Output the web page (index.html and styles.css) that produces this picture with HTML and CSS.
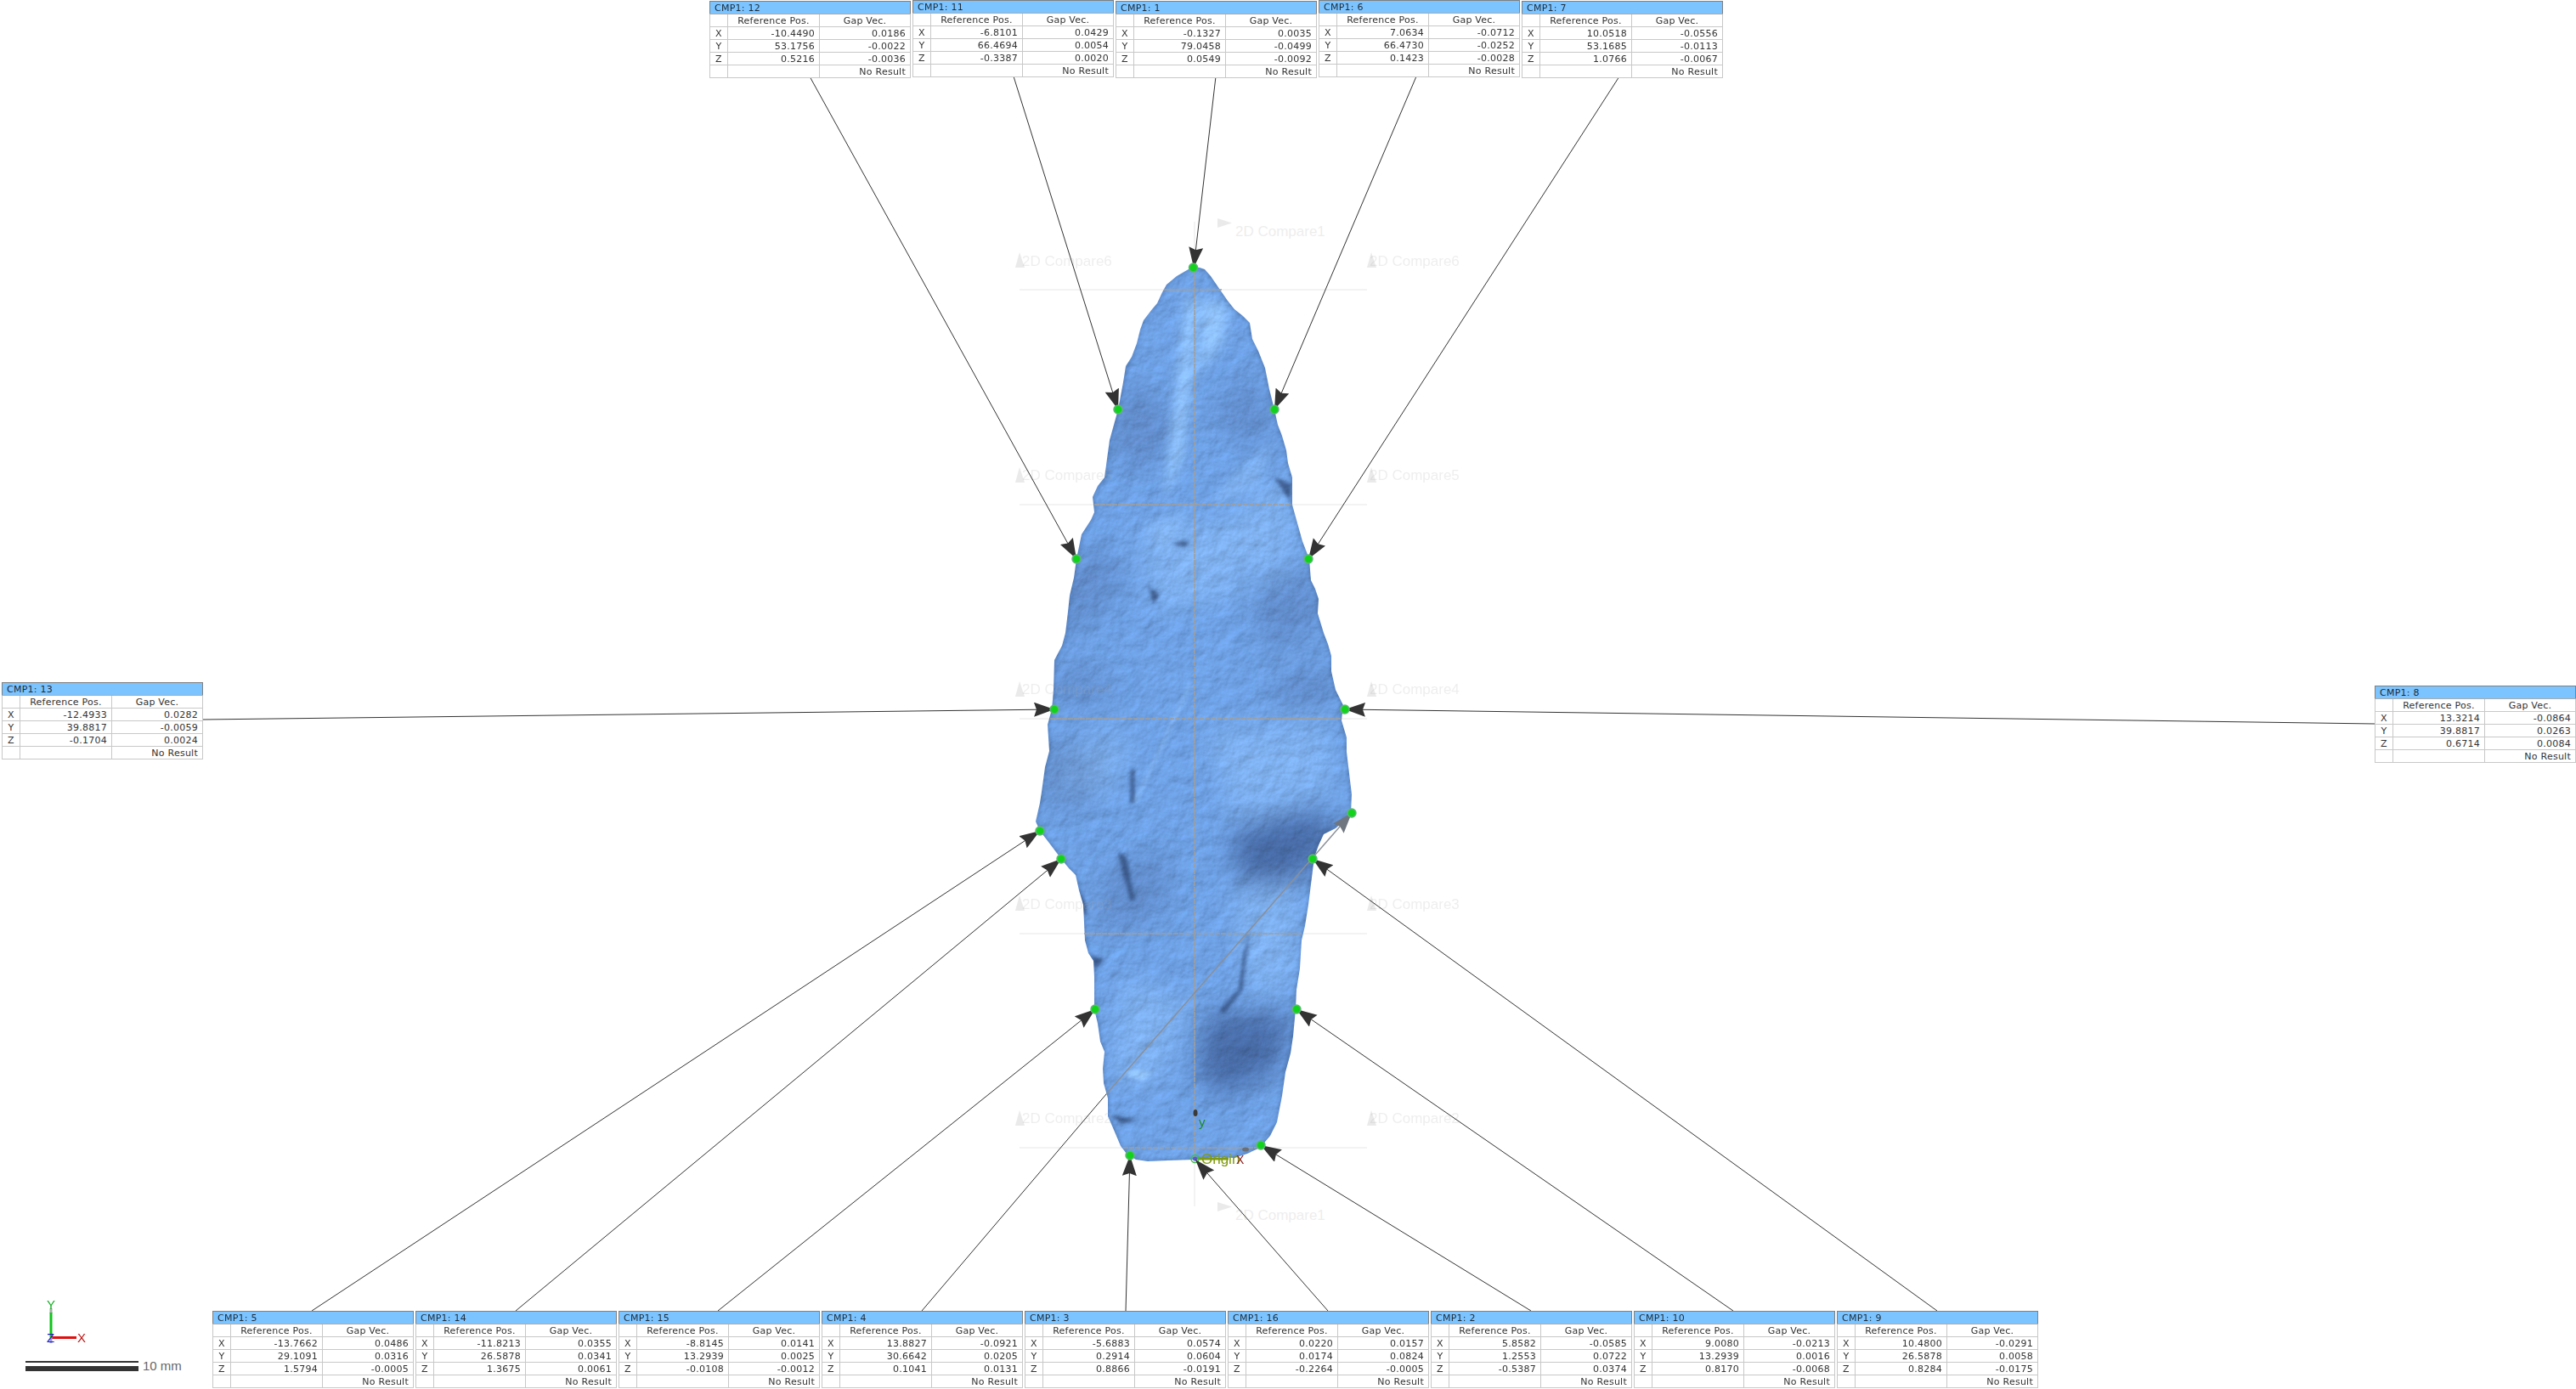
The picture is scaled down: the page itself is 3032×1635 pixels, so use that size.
FILE: index.html
```html
<!DOCTYPE html>
<html lang="en">
<head>
    <meta charset="UTF-8">
    <title>2D Compare</title>
    <link rel="stylesheet" href="styles.css">
</head>
<body>
<div class="canvas">
    <svg class="scene" width="3032" height="1635" viewBox="0 0 3032 1635">
        <defs>
            <marker id="head" markerUnits="userSpaceOnUse" markerWidth="26" markerHeight="18" refX="24" refY="8.5" orient="auto">
                <path d="M0 0 L24 8.5 L0 17 L3 8.5 Z" fill="#333"/>
            </marker>
            <marker id="head-grey" markerUnits="userSpaceOnUse" markerWidth="26" markerHeight="18" refX="24" refY="8.5" orient="auto">
                <path d="M0 0 L24 8.5 L0 17 L3 8.5 Z" fill="#6f7680"/>
            </marker>
            <clipPath id="stone-clip">
                <use href="#stone-shape"/>
            </clipPath>
            <filter id="blur2" x="-30%" y="-30%" width="160%" height="160%"><feGaussianBlur stdDeviation="2"/></filter>
            <filter id="blur7" x="-40%" y="-40%" width="180%" height="180%"><feGaussianBlur stdDeviation="7"/></filter>
            <filter id="blur16" x="-50%" y="-50%" width="200%" height="200%"><feGaussianBlur stdDeviation="16"/></filter>
            <filter id="stone-tex" x="1200" y="300" width="410" height="1080" filterUnits="userSpaceOnUse" color-interpolation-filters="sRGB">
                <feTurbulence type="fractalNoise" baseFrequency="0.05" numOctaves="4" seed="5" result="noise"/>
                <feDiffuseLighting in="noise" surfaceScale="1.2" diffuseConstant="1" lighting-color="#fff" result="light">
                    <feDistantLight azimuth="235" elevation="62"/>
                </feDiffuseLighting>
                <feComposite in="SourceGraphic" in2="light" operator="arithmetic" k1="1.13" k2="0" k3="0" k4="0"/>
            </filter>
            <path id="stone-shape" d="M1404 314 L1412 315 L1418 317 L1425 325 L1436 341 L1445 354 L1453 364 L1463 372 L1471 380 L1474 399 L1481 413 L1489 433 L1494 458 L1500 482 L1504 500 L1509 513 L1514 530 L1516 545 L1521 562 L1521 594 L1526 612 L1533 637 L1541 658 L1543 683 L1548 693 L1552 705 L1551 722 L1558 745 L1563 758 L1567 772 L1567 790 L1572 812 L1581 830 L1579 848 L1585 868 L1585 885 L1588 910 L1591 935 L1590 958 L1581 967 L1572 975 L1558 982 L1552 995 L1547 1009 L1544 1033 L1540 1065 L1536 1090 L1532 1107 L1530 1140 L1526 1165 L1525 1188 L1522 1220 L1519 1240 L1513 1262 L1509 1290 L1503 1321 L1495 1337 L1483 1351 L1468 1358 L1453 1363 L1430 1362 L1405 1365 L1375 1366 L1351 1367 L1337 1365 L1326 1358 L1319 1349 L1311 1330 L1304 1314 L1304 1293 L1299 1275 L1298 1258 L1300 1238 L1295 1226 L1292 1205 L1288 1188 L1288 1150 L1287 1131 L1281 1122 L1277 1107 L1275 1065 L1270 1048 L1266 1030 L1258 1022 L1249 1011 L1237 995 L1224 978 L1219 967 L1224 945 L1226 932 L1230 903 L1235 884 L1233 853 L1238 835 L1240 812 L1241 777 L1250 760 L1254 745 L1257 720 L1259 701 L1264 680 L1267 658 L1273 629 L1284 612 L1288 603 L1286 585 L1292 572 L1300 562 L1303 540 L1306 518 L1316 482 L1322 450 L1325 431 L1332 420 L1338 404 L1342 388 L1346 377 L1356 364 L1362 357 L1368 344 L1373 335 L1385 325 Z"/>
        </defs>

        <!-- faint construction lines and section labels -->
        <g class="guides">
            <line x1="1200" y1="341" x2="1609" y2="341"/>
            <line x1="1200" y1="594" x2="1609" y2="594"/>
            <line x1="1200" y1="846" x2="1609" y2="846"/>
            <line x1="1200" y1="1099" x2="1609" y2="1099"/>
            <line x1="1200" y1="1351" x2="1609" y2="1351"/>
            <line x1="1406" y1="261" x2="1406" y2="1420"/>
        </g>

        <!-- stone -->
        <g clip-path="url(#stone-clip)">
            <g filter="url(#stone-tex)">
                <rect class="stone-base" x="1200" y="300" width="410" height="1080"/>
                <g filter="url(#blur16)">
                    <path class="lit-soft" d="M1470 580 L1510 560 L1530 640 L1490 690 L1450 640 Z"/>
                    <path class="lit-soft" d="M1250 880 L1330 860 L1310 930 L1240 940 Z"/>
                    <path class="lit-soft" d="M1420 860 L1560 850 L1570 930 L1450 960 Z"/>
                    <path class="lit-soft" d="M1320 1150 L1400 1180 L1360 1280 L1310 1270 Z"/>
                    <path class="lit-soft" d="M1450 1050 L1530 1040 L1525 1160 L1470 1170 Z"/>
                    <path class="lit-soft" d="M1340 620 L1470 610 L1460 700 L1360 720 Z"/>
                    <path class="shade" d="M1450 975 L1560 950 L1570 985 L1530 1040 L1460 1045 Z"/>
                    <path class="shade" d="M1415 1195 L1520 1190 L1505 1260 L1440 1290 L1410 1270 Z"/>
                    <path class="shade-soft" d="M1235 680 L1290 640 L1330 680 L1260 760 Z"/>
                    <path class="shade-soft" d="M1320 440 L1400 500 L1340 560 L1305 530 Z"/>
                    <path class="shade-soft" d="M1480 430 L1420 490 L1500 540 Z"/>
                    <path class="shade-soft" d="M1540 660 L1470 690 L1490 770 L1560 740 Z"/>
                    <path class="shade-soft" d="M1225 870 L1300 880 L1280 960 L1225 950 Z"/>
                    <path class="shade-soft" d="M1240 780 L1320 800 L1290 830 L1236 820 Z"/>
                    <path class="shade-soft" d="M1570 780 L1490 800 L1510 840 L1580 830 Z"/>
                    <path class="shade-soft" d="M1300 1020 L1380 1000 L1370 1080 L1290 1100 Z"/>
                </g>
                <g filter="url(#blur7)">
                    <path class="lit" d="M1396 350 L1410 350 L1404 440 L1392 540 L1370 590 L1380 500 Z"/>
                    <path class="lit" d="M1416 350 L1446 360 L1440 400 L1412 440 Z"/>
                    <path class="lit-soft" d="M1450 560 L1500 520 L1480 570 L1420 600 Z"/>
                    <path class="lit-soft" d="M1350 620 L1400 600 L1370 650 Z"/>
                </g>
                <g filter="url(#blur2)">
                    <path class="lit" d="M1330 1258 L1356 1262 L1345 1272 L1325 1266 Z"/>
                    <path class="lit-soft" d="M1400 803 L1403 806 L1338 946 L1334 944 Z"/>
                    <path class="crack" d="M1331 905 L1335 905 L1336 945 L1330 945 Z"/>
                    <path class="crack" d="M1316 1002 L1326 1010 L1336 1060 L1331 1060 L1322 1030 Z"/>
                    <path class="crack" d="M1306 1312 L1340 1319 L1320 1322 Z"/>
                    <path class="crack" d="M1473 1090 L1466 1130 L1463 1165 L1442 1192 L1434 1190 L1458 1164 L1463 1125 Z"/>
                    <path class="crack" d="M1260 1040 L1276 1060 L1280 1078 L1266 1066 Z"/>
                    <path class="crack" d="M1285 1125 L1300 1130 L1288 1140 Z"/>
                    <path class="crack" d="M1500 562 L1518 590 L1520 570 Z"/>
                    <path class="crack" d="M1380 640 L1400 636 L1395 644 Z"/>
                    <path class="crack" d="M1352 690 L1364 700 L1358 712 Z"/>
                </g>
                <use href="#stone-shape" class="rim" filter="url(#blur2)"/>
            </g>
        </g>

        <g class="section-lines">
            <line x1="1370" y1="341" x2="1438" y2="341"/>
            <line x1="1288" y1="594" x2="1520" y2="594"/>
            <line x1="1236" y1="846" x2="1578" y2="846"/>
            <line x1="1276" y1="1099" x2="1532" y2="1099"/>
            <line x1="1322" y1="1351" x2="1483" y2="1351"/>
            <line x1="1406" y1="316" x2="1406" y2="1365"/>
        </g>

        <g class="section-labels">
            <path d="M1433 257 L1450 262.5 L1433 268 Z"/><text x="1454" y="278">2D Compare1</text>
            <path d="M1433 1415 L1450 1420.5 L1433 1426 Z"/><text x="1454" y="1436">2D Compare1</text>
            <path d="M1195 315 L1200 297 L1206 315 Z"/><text x="1203" y="313">2D Compare6</text>
            <path d="M1609 315 L1614 297 L1620 315 Z"/><text x="1612" y="313">2D Compare6</text>
            <path d="M1195 568 L1200 550 L1206 568 Z"/><text x="1203" y="565">2D Compare5</text>
            <path d="M1609 568 L1614 550 L1620 568 Z"/><text x="1612" y="565">2D Compare5</text>
            <path d="M1195 820 L1200 802 L1206 820 Z"/><text x="1203" y="817">2D Compare4</text>
            <path d="M1609 820 L1614 802 L1620 820 Z"/><text x="1612" y="817">2D Compare4</text>
            <path d="M1195 1072 L1200 1054 L1206 1072 Z"/><text x="1203" y="1070">2D Compare3</text>
            <path d="M1609 1072 L1614 1054 L1620 1072 Z"/><text x="1612" y="1070">2D Compare3</text>
            <path d="M1195 1325 L1200 1307 L1206 1325 Z"/><text x="1203" y="1322">2D Compare2</text>
            <path d="M1609 1325 L1614 1307 L1620 1325 Z"/><text x="1612" y="1322">2D Compare2</text>
        </g>

        <!-- origin marker -->
        <g class="origin">
            <ellipse class="blob" cx="1407" cy="1310" rx="2.5" ry="4"/>
            <ellipse class="blob-grey" cx="1466" cy="1353" rx="4" ry="2.5"/>
            <line class="origin-x" x1="1408" y1="1364" x2="1446" y2="1364"/>
            <circle class="origin-ring" cx="1406.5" cy="1364" r="4.5"/>
            <circle class="origin-dot" cx="1406.5" cy="1364" r="2.5"/>
            <text class="origin-name" x="1414" y="1370">Origin</text>
            <text class="origin-xlabel" x="1455" y="1370">X</text>
            <text class="origin-ylabel" x="1411" y="1326">y</text>
        </g>

        <!-- leader lines -->
        <g class="leaders">
            <line x1="953" y1="90" x2="1267" y2="658" marker-end="url(#head)"/>
            <line x1="1193" y1="90" x2="1316" y2="482" marker-end="url(#head)"/>
            <line x1="1431" y1="90" x2="1405" y2="315" marker-end="url(#head)"/>
            <line x1="1667" y1="90" x2="1500" y2="482" marker-end="url(#head)"/>
            <line x1="1906" y1="90" x2="1540" y2="658" marker-end="url(#head)"/>
            <line x1="239" y1="847" x2="1241" y2="835" marker-end="url(#head)"/>
            <line x1="2795" y1="852" x2="1583" y2="835" marker-end="url(#head)"/>
            <line x1="367" y1="1543" x2="1224" y2="978" marker-end="url(#head)"/>
            <line x1="607" y1="1543" x2="1249" y2="1011" marker-end="url(#head)"/>
            <line x1="845" y1="1543" x2="1289" y2="1188" marker-end="url(#head)"/>
            <line x1="1085" y1="1543" x2="1302" y2="1288"/>
            <line class="hidden-leg" x1="1302" y1="1288" x2="1591" y2="957" marker-end="url(#head-grey)"/>
            <line x1="1325" y1="1543" x2="1330" y2="1360" marker-end="url(#head)"/>
            <line x1="1563" y1="1543" x2="1407" y2="1365" marker-end="url(#head)"/>
            <line x1="1802" y1="1543" x2="1484" y2="1348" marker-end="url(#head)"/>
            <line x1="2040" y1="1543" x2="1526" y2="1188" marker-end="url(#head)"/>
            <line x1="2280" y1="1543" x2="1545" y2="1011" marker-end="url(#head)"/>
        </g>

        <!-- measured points -->
        <g class="points">
            <circle cx="1404.5" cy="315" r="5"/><circle cx="1316" cy="482" r="5"/><circle cx="1500" cy="482" r="5"/>
            <circle cx="1267" cy="658" r="5"/><circle cx="1540" cy="658" r="5"/><circle cx="1241" cy="835" r="5"/>
            <circle cx="1583" cy="835" r="5"/><circle cx="1224" cy="978" r="5"/><circle cx="1249" cy="1011" r="5"/>
            <circle cx="1289" cy="1188" r="5"/><circle cx="1591" cy="957" r="5"/><circle cx="1330" cy="1360" r="5"/>
            <circle cx="1484" cy="1348" r="5"/><circle cx="1526" cy="1188" r="5"/><circle cx="1545" cy="1011" r="5"/>
        </g>

        <!-- axis triad -->
        <g class="triad">
            <line class="axis-tip" x1="60" y1="1540" x2="60" y2="1546"/>
            <line class="axis-y" x1="60" y1="1545" x2="60" y2="1574"/>
            <line class="axis-x" x1="60" y1="1574.5" x2="90" y2="1574.5"/>
            <line class="axis-z" x1="60" y1="1574" x2="60" y2="1581"/>
            <text class="label-y" x="55" y="1541">Y</text>
            <text class="label-x" x="91" y="1580">X</text>
            <text class="label-z" x="55" y="1580">Z</text>
        </g>
    </svg>

    <div class="scale">
        <div class="scale-bar"></div>
        <span class="scale-text">10 mm</span>
    </div>

    <div class="row row-top">
        <table class="box low"><colgroup><col class="c1"><col class="c2"><col></colgroup><tr><th colspan="3">CMP1: 12</th></tr><tr><td></td><td class="hd">Reference Pos.</td><td class="hd">Gap Vec.</td></tr><tr><td class="ax">X</td><td>-10.4490</td><td>0.0186</td></tr><tr><td class="ax">Y</td><td>53.1756</td><td>-0.0022</td></tr><tr><td class="ax">Z</td><td>0.5216</td><td>-0.0036</td></tr><tr><td></td><td></td><td>No Result</td></tr></table>
        <table class="box"><colgroup><col class="c1"><col class="c2"><col></colgroup><tr><th colspan="3">CMP1: 11</th></tr><tr><td></td><td class="hd">Reference Pos.</td><td class="hd">Gap Vec.</td></tr><tr><td class="ax">X</td><td>-6.8101</td><td>0.0429</td></tr><tr><td class="ax">Y</td><td>66.4694</td><td>0.0054</td></tr><tr><td class="ax">Z</td><td>-0.3387</td><td>0.0020</td></tr><tr><td></td><td></td><td>No Result</td></tr></table>
        <table class="box low"><colgroup><col class="c1"><col class="c2"><col></colgroup><tr><th colspan="3">CMP1: 1</th></tr><tr><td></td><td class="hd">Reference Pos.</td><td class="hd">Gap Vec.</td></tr><tr><td class="ax">X</td><td>-0.1327</td><td>0.0035</td></tr><tr><td class="ax">Y</td><td>79.0458</td><td>-0.0499</td></tr><tr><td class="ax">Z</td><td>0.0549</td><td>-0.0092</td></tr><tr><td></td><td></td><td>No Result</td></tr></table>
        <table class="box"><colgroup><col class="c1"><col class="c2"><col></colgroup><tr><th colspan="3">CMP1: 6</th></tr><tr><td></td><td class="hd">Reference Pos.</td><td class="hd">Gap Vec.</td></tr><tr><td class="ax">X</td><td>7.0634</td><td>-0.0712</td></tr><tr><td class="ax">Y</td><td>66.4730</td><td>-0.0252</td></tr><tr><td class="ax">Z</td><td>0.1423</td><td>-0.0028</td></tr><tr><td></td><td></td><td>No Result</td></tr></table>
        <table class="box low"><colgroup><col class="c1"><col class="c2"><col></colgroup><tr><th colspan="3">CMP1: 7</th></tr><tr><td></td><td class="hd">Reference Pos.</td><td class="hd">Gap Vec.</td></tr><tr><td class="ax">X</td><td>10.0518</td><td>-0.0556</td></tr><tr><td class="ax">Y</td><td>53.1685</td><td>-0.0113</td></tr><tr><td class="ax">Z</td><td>1.0766</td><td>-0.0067</td></tr><tr><td></td><td></td><td>No Result</td></tr></table>
    </div>

    <table class="box side-left"><colgroup><col class="c1"><col class="c2"><col></colgroup><tr><th colspan="3">CMP1: 13</th></tr><tr><td></td><td class="hd">Reference Pos.</td><td class="hd">Gap Vec.</td></tr><tr><td class="ax">X</td><td>-12.4933</td><td>0.0282</td></tr><tr><td class="ax">Y</td><td>39.8817</td><td>-0.0059</td></tr><tr><td class="ax">Z</td><td>-0.1704</td><td>0.0024</td></tr><tr><td></td><td></td><td>No Result</td></tr></table>
    <table class="box side-right"><colgroup><col class="c1"><col class="c2"><col></colgroup><tr><th colspan="3">CMP1: 8</th></tr><tr><td></td><td class="hd">Reference Pos.</td><td class="hd">Gap Vec.</td></tr><tr><td class="ax">X</td><td>13.3214</td><td>-0.0864</td></tr><tr><td class="ax">Y</td><td>39.8817</td><td>0.0263</td></tr><tr><td class="ax">Z</td><td>0.6714</td><td>0.0084</td></tr><tr><td></td><td></td><td>No Result</td></tr></table>

    <div class="row row-bottom">
        <table class="box"><colgroup><col class="c1"><col class="c2"><col></colgroup><tr><th colspan="3">CMP1: 5</th></tr><tr><td></td><td class="hd">Reference Pos.</td><td class="hd">Gap Vec.</td></tr><tr><td class="ax">X</td><td>-13.7662</td><td>0.0486</td></tr><tr><td class="ax">Y</td><td>29.1091</td><td>0.0316</td></tr><tr><td class="ax">Z</td><td>1.5794</td><td>-0.0005</td></tr><tr><td></td><td></td><td>No Result</td></tr></table>
        <table class="box"><colgroup><col class="c1"><col class="c2"><col></colgroup><tr><th colspan="3">CMP1: 14</th></tr><tr><td></td><td class="hd">Reference Pos.</td><td class="hd">Gap Vec.</td></tr><tr><td class="ax">X</td><td>-11.8213</td><td>0.0355</td></tr><tr><td class="ax">Y</td><td>26.5878</td><td>0.0341</td></tr><tr><td class="ax">Z</td><td>1.3675</td><td>0.0061</td></tr><tr><td></td><td></td><td>No Result</td></tr></table>
        <table class="box"><colgroup><col class="c1"><col class="c2"><col></colgroup><tr><th colspan="3">CMP1: 15</th></tr><tr><td></td><td class="hd">Reference Pos.</td><td class="hd">Gap Vec.</td></tr><tr><td class="ax">X</td><td>-8.8145</td><td>0.0141</td></tr><tr><td class="ax">Y</td><td>13.2939</td><td>0.0025</td></tr><tr><td class="ax">Z</td><td>-0.0108</td><td>-0.0012</td></tr><tr><td></td><td></td><td>No Result</td></tr></table>
        <table class="box"><colgroup><col class="c1"><col class="c2"><col></colgroup><tr><th colspan="3">CMP1: 4</th></tr><tr><td></td><td class="hd">Reference Pos.</td><td class="hd">Gap Vec.</td></tr><tr><td class="ax">X</td><td>13.8827</td><td>-0.0921</td></tr><tr><td class="ax">Y</td><td>30.6642</td><td>0.0205</td></tr><tr><td class="ax">Z</td><td>0.1041</td><td>0.0131</td></tr><tr><td></td><td></td><td>No Result</td></tr></table>
        <table class="box"><colgroup><col class="c1"><col class="c2"><col></colgroup><tr><th colspan="3">CMP1: 3</th></tr><tr><td></td><td class="hd">Reference Pos.</td><td class="hd">Gap Vec.</td></tr><tr><td class="ax">X</td><td>-5.6883</td><td>0.0574</td></tr><tr><td class="ax">Y</td><td>0.2914</td><td>0.0604</td></tr><tr><td class="ax">Z</td><td>0.8866</td><td>-0.0191</td></tr><tr><td></td><td></td><td>No Result</td></tr></table>
        <table class="box"><colgroup><col class="c1"><col class="c2"><col></colgroup><tr><th colspan="3">CMP1: 16</th></tr><tr><td></td><td class="hd">Reference Pos.</td><td class="hd">Gap Vec.</td></tr><tr><td class="ax">X</td><td>0.0220</td><td>0.0157</td></tr><tr><td class="ax">Y</td><td>0.0174</td><td>0.0824</td></tr><tr><td class="ax">Z</td><td>-0.2264</td><td>-0.0005</td></tr><tr><td></td><td></td><td>No Result</td></tr></table>
        <table class="box"><colgroup><col class="c1"><col class="c2"><col></colgroup><tr><th colspan="3">CMP1: 2</th></tr><tr><td></td><td class="hd">Reference Pos.</td><td class="hd">Gap Vec.</td></tr><tr><td class="ax">X</td><td>5.8582</td><td>-0.0585</td></tr><tr><td class="ax">Y</td><td>1.2553</td><td>0.0722</td></tr><tr><td class="ax">Z</td><td>-0.5387</td><td>0.0374</td></tr><tr><td></td><td></td><td>No Result</td></tr></table>
        <table class="box"><colgroup><col class="c1"><col class="c2"><col></colgroup><tr><th colspan="3">CMP1: 10</th></tr><tr><td></td><td class="hd">Reference Pos.</td><td class="hd">Gap Vec.</td></tr><tr><td class="ax">X</td><td>9.0080</td><td>-0.0213</td></tr><tr><td class="ax">Y</td><td>13.2939</td><td>0.0016</td></tr><tr><td class="ax">Z</td><td>0.8170</td><td>-0.0068</td></tr><tr><td></td><td></td><td>No Result</td></tr></table>
        <table class="box"><colgroup><col class="c1"><col class="c2"><col></colgroup><tr><th colspan="3">CMP1: 9</th></tr><tr><td></td><td class="hd">Reference Pos.</td><td class="hd">Gap Vec.</td></tr><tr><td class="ax">X</td><td>10.4800</td><td>-0.0291</td></tr><tr><td class="ax">Y</td><td>26.5878</td><td>0.0058</td></tr><tr><td class="ax">Z</td><td>0.8284</td><td>-0.0175</td></tr><tr><td></td><td></td><td>No Result</td></tr></table>
    </div>
</div>
</body>
</html>
```

FILE: styles.css
```css
html, body {
    margin: 0;
    padding: 0;
    background: #fff;
}
.canvas {
    position: relative;
    width: 3032px;
    height: 1635px;
    overflow: hidden;
    font-family: "DejaVu Sans", sans-serif;
}
.scene {
    position: absolute;
    left: 0;
    top: 0;
}

/* result boxes */
.row {
    position: absolute;
    display: flex;
    gap: 2px;
}
.row-top {
    left: 835px;
    top: 0;
}
.row-bottom {
    left: 250px;
    top: 1543px;
}
.box {
    width: 237px;
    border-collapse: collapse;
    table-layout: fixed;
    background: #fff;
    border: 1px solid #808080;
    font-size: 11px;
    line-height: 13px;
    letter-spacing: .25px;
    color: #333;
    flex: none;
    align-self: flex-start;
}
.box .c1 {
    width: 21px;
}
.box .c2 {
    width: 108px;
}
.box.low {
    margin-top: 1px;
}
.side-left {
    position: absolute;
    left: 2px;
    top: 803px;
}
.side-right {
    position: absolute;
    left: 2795px;
    top: 807px;
}
.box th {
    height: 14px;
    padding: 0 0 0 5px;
    background: #7cc4ff;
    border-bottom: 1px solid #aaa;
    font-weight: normal;
    text-align: left;
    color: #1c2a38;
}
.box td {
    height: 14px;
    padding: 0 5px 0 0;
    border: 1px solid #c8c8c8;
    text-align: right;
    white-space: nowrap;
}
.box td.ax,
.box td.hd {
    padding: 0;
    text-align: center;
}

/* scale bar */
.scale {
    position: absolute;
    left: 30px;
    top: 1599px;
    display: flex;
    align-items: center;
    gap: 5px;
}
.scale-bar {
    width: 133px;
    height: 12px;
    box-sizing: border-box;
    background: linear-gradient(#333 2px, #fff 2px, #fff 6px, #333 6px);
}
.scale-text {
    font-family: "Liberation Sans", sans-serif;
    font-size: 15px;
    color: #666;
}

/* drawing */
.guides line {
    stroke: #e6e6e6;
    stroke-width: 1;
}
.stone-base {
    fill: #6fa2e6;
}
.lit {
    fill: #98caff;
    opacity: .85;
}
.lit-soft {
    fill: #8abaf5;
    opacity: .6;
}
.shade {
    fill: #3d5f97;
    opacity: .8;
}
.shade-soft {
    fill: #47689f;
    opacity: .35;
}
.crack {
    fill: #2f4a78;
    opacity: .8;
}
.rim {
    fill: none;
    stroke: #27406c;
    stroke-width: 2;
    opacity: .55;
}
.section-lines line {
    stroke: #a39f98;
    stroke-width: 1.5;
    stroke-dasharray: 6 1;
}
.section-labels path {
    fill: #aaa;
    opacity: .25;
}
.section-labels text {
    font-family: "Liberation Sans", sans-serif;
    font-size: 17px;
    fill: #aaa;
    opacity: .2;
}
.leaders line {
    stroke: #333;
    stroke-width: 1;
}
.leaders line.hidden-leg {
    stroke: #8a9099;
    stroke-width: 1.5;
}
.points circle {
    fill: #12d31c;
    stroke: #5fb776;
    stroke-width: 1.5;
}

/* origin */
.blob {
    fill: #3a3a3a;
}
.blob-grey {
    fill: #6b7078;
}
.origin-x {
    stroke: #7f9a12;
    stroke-width: 3;
}
.origin-ring {
    fill: none;
    stroke: #3fc04a;
    stroke-width: 1.5;
}
.origin-dot {
    fill: #5858c8;
}
.origin-name {
    font-family: "Liberation Sans", sans-serif;
    font-size: 17px;
    fill: #7f9a12;
}
.origin-xlabel {
    font-family: "Liberation Sans", sans-serif;
    font-size: 14px;
    fill: #8a1a1a;
}
.origin-ylabel {
    font-family: "Liberation Sans", sans-serif;
    font-size: 15px;
    fill: #1c8a2a;
}

/* axis triad */
.axis-tip {
    stroke: #aaa;
    stroke-width: 3;
}
.axis-y {
    stroke: #0fc41a;
    stroke-width: 3;
}
.axis-x {
    stroke: #e01010;
    stroke-width: 3;
}
.axis-z {
    stroke: #9a9ae0;
    stroke-width: 3;
}
.triad text {
    font-family: "Liberation Sans", sans-serif;
    font-size: 15px;
}
.label-y {
    fill: #12b020;
}
.label-x {
    fill: #c01818;
}
.label-z {
    fill: #2020c0;
}
```
